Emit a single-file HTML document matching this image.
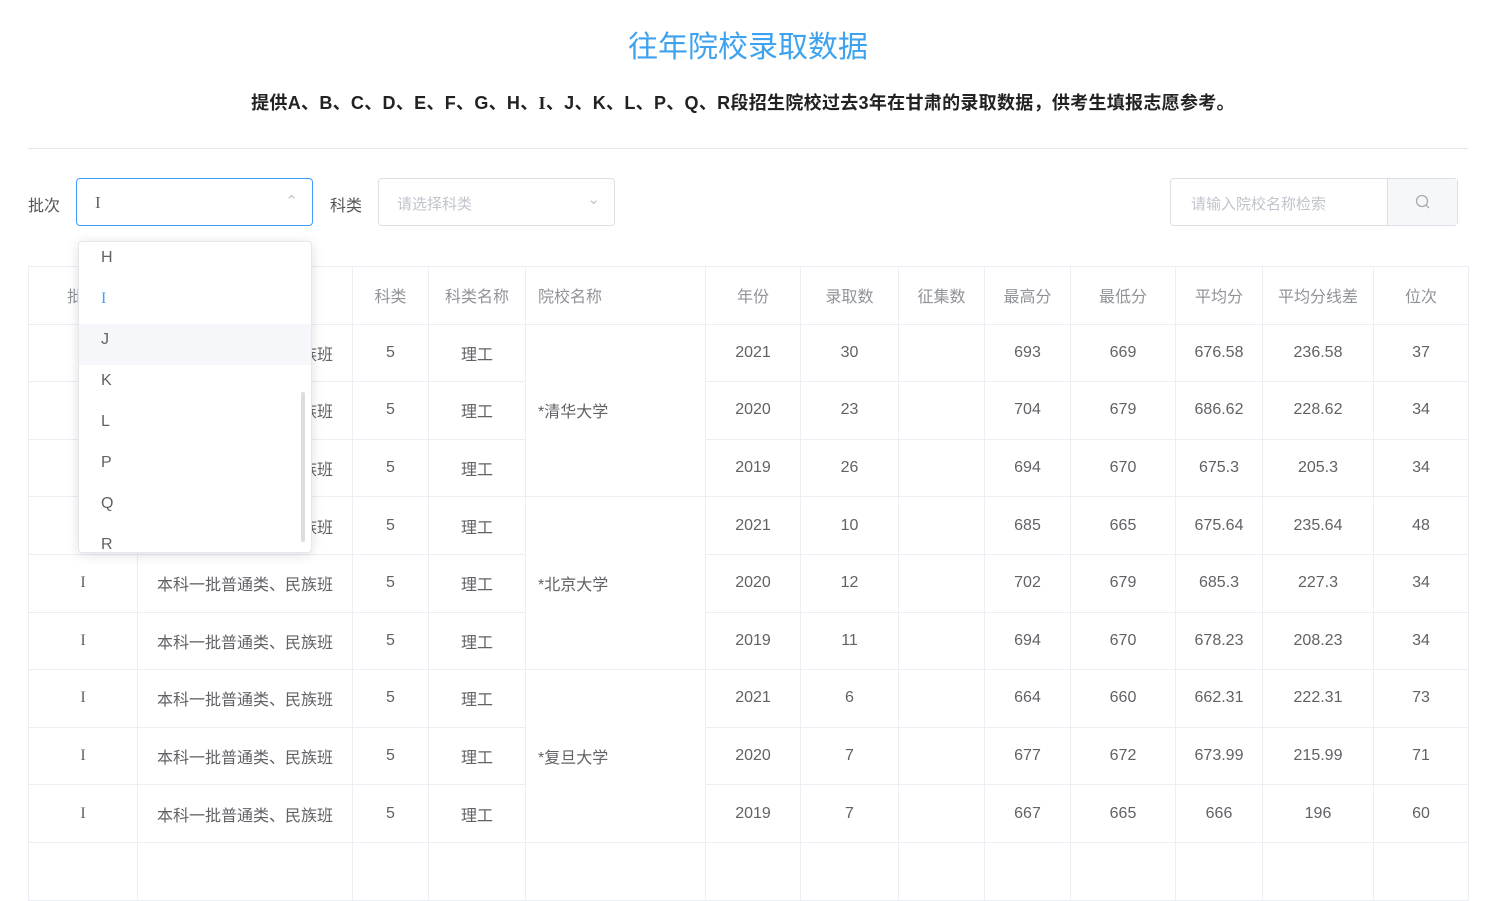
<!DOCTYPE html>
<html><head><meta charset="utf-8"><style>
*{margin:0;padding:0;box-sizing:border-box}
body{width:1488px;height:850px;overflow:hidden;background:#fff;font-family:"Liberation Sans","Noto Sans CJK SC",sans-serif;color:#606266;position:relative}
.title{position:absolute;top:22px;left:0;width:1496px;text-align:center;font-size:30px;color:#3ea2ee}
.sub{position:absolute;top:89px;left:0;width:1486px;text-align:center;font-size:18px;color:#222;font-weight:bold;letter-spacing:0.3px}
.hr{position:absolute;top:148px;left:28px;width:1440px;height:1px;background:#e4e7ed}
.lbl{position:absolute;top:192px;font-size:16px;color:#555}
.box{position:absolute;top:178px;height:48px;border:1px solid #dcdfe6;border-radius:4px;font-size:15px;color:#c0c4cc;padding:14px 18px}
table{position:absolute;left:28px;top:266px;border-collapse:collapse;font-size:16px;table-layout:fixed}
td,th{border:1px solid #ebeef5;text-align:center;height:57.6px;font-weight:normal;color:#606266;vertical-align:middle}
th{color:#909399}
.s{font-family:"Liberation Serif",serif}
.dd{position:absolute;left:78px;top:241px;width:234px;height:312px;background:#fff;box-shadow:0 2px 12px rgba(0,0,0,.12);border:1px solid #e4e7ed;border-radius:4px;overflow:hidden}
.dd div{height:41px;line-height:31px;padding-left:22px;font-size:16px;color:#606266}
</style></head><body>
<div class="title">往年院校录取数据</div>
<div class="sub">提供A、B、C、D、E、F、G、H、<span class="s">I</span>、J、K、L、P、Q、R段招生院校过去3年在甘肃的录取数据，供考生填报志愿参考。</div>
<div class="hr"></div>
<div class="lbl" style="left:28px">批次</div>
<div class="box" style="left:76px;width:237px;border-color:#409eff;color:#606266"><span class="s" style="font-size:17px">I</span><span style="position:absolute;right:14px;top:13px;color:#c0c4cc">&#8963;</span></div>
<div class="lbl" style="left:330px">科类</div>
<div class="box" style="left:378px;width:237px">请选择科类<span style="position:absolute;right:14px;top:11px">&#8964;</span></div>
<div class="box" style="left:1170px;width:288px;padding-left:20px">请输入院校名称检索<div style="position:absolute;right:0;top:0;width:70px;height:46px;background:#f5f7fa;border-left:1px solid #dcdfe6"><svg width="16" height="16" style="position:absolute;left:27px;top:15px" viewBox="0 0 16 16"><circle cx="7" cy="7" r="5.5" fill="none" stroke="#aaa" stroke-width="1.3"/><path d="M11 11l3 3" stroke="#aaa" stroke-width="1.3"/></svg></div></div>
<table>
<colgroup><col style="width:109px"><col style="width:215px"><col style="width:76px"><col style="width:97px"><col style="width:180px"><col style="width:95px"><col style="width:98px"><col style="width:86px"><col style="width:86px"><col style="width:105px"><col style="width:87px"><col style="width:111px"><col style="width:95px"></colgroup>
<tr><th>批次</th><th></th><th>科类</th><th>科类名称</th><th style="text-align:left;padding-left:12px">院校名称</th><th>年份</th><th>录取数</th><th>征集数</th><th>最高分</th><th>最低分</th><th>平均分</th><th>平均分线差</th><th>位次</th></tr>
<tr><td class="s">I</td><td>本科一批普通类、民族班</td><td>5</td><td>理工</td><td rowspan="3" style="text-align:left;padding-left:12px">*清华大学</td><td>2021</td><td>30</td><td></td><td>693</td><td>669</td><td>676.58</td><td>236.58</td><td>37</td></tr>
<tr><td class="s">I</td><td>本科一批普通类、民族班</td><td>5</td><td>理工</td><td>2020</td><td>23</td><td></td><td>704</td><td>679</td><td>686.62</td><td>228.62</td><td>34</td></tr>
<tr><td class="s">I</td><td>本科一批普通类、民族班</td><td>5</td><td>理工</td><td>2019</td><td>26</td><td></td><td>694</td><td>670</td><td>675.3</td><td>205.3</td><td>34</td></tr>
<tr><td class="s">I</td><td>本科一批普通类、民族班</td><td>5</td><td>理工</td><td rowspan="3" style="text-align:left;padding-left:12px">*北京大学</td><td>2021</td><td>10</td><td></td><td>685</td><td>665</td><td>675.64</td><td>235.64</td><td>48</td></tr>
<tr><td class="s">I</td><td>本科一批普通类、民族班</td><td>5</td><td>理工</td><td>2020</td><td>12</td><td></td><td>702</td><td>679</td><td>685.3</td><td>227.3</td><td>34</td></tr>
<tr><td class="s">I</td><td>本科一批普通类、民族班</td><td>5</td><td>理工</td><td>2019</td><td>11</td><td></td><td>694</td><td>670</td><td>678.23</td><td>208.23</td><td>34</td></tr>
<tr><td class="s">I</td><td>本科一批普通类、民族班</td><td>5</td><td>理工</td><td rowspan="3" style="text-align:left;padding-left:12px">*复旦大学</td><td>2021</td><td>6</td><td></td><td>664</td><td>660</td><td>662.31</td><td>222.31</td><td>73</td></tr>
<tr><td class="s">I</td><td>本科一批普通类、民族班</td><td>5</td><td>理工</td><td>2020</td><td>7</td><td></td><td>677</td><td>672</td><td>673.99</td><td>215.99</td><td>71</td></tr>
<tr><td class="s">I</td><td>本科一批普通类、民族班</td><td>5</td><td>理工</td><td>2019</td><td>7</td><td></td><td>667</td><td>665</td><td>666</td><td>196</td><td>60</td></tr>
<tr><td></td><td></td><td></td><td></td><td></td><td></td><td></td><td></td><td></td><td></td><td></td><td></td><td></td></tr>
</table>
<div class="dd">
<div>H</div><div style="color:#409eff" class="s">I</div><div style="background:#f5f7fa">J</div><div>K</div><div>L</div><div>P</div><div>Q</div><div>R</div>
<span style="position:absolute;right:6px;top:150px;width:4px;height:150px;background:#ddd;border-radius:2px"></span>
</div>
</body></html>
